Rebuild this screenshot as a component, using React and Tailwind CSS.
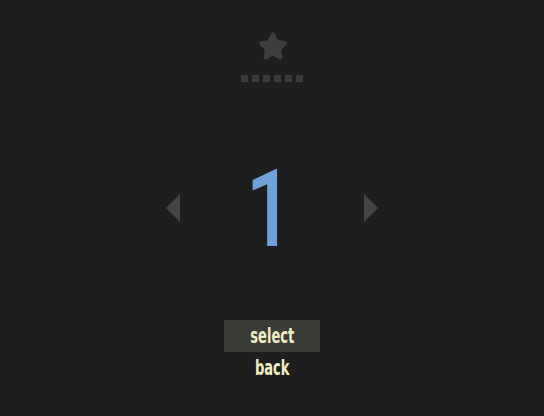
import React from "react";

function Star() {
  const cx = 15, cy = 16.2, R = 12.6, r = 6.3;
  const pts = [];
  for (let i = 0; i < 10; i++) {
    const a = -Math.PI / 2 + (i * Math.PI) / 5;
    const rad = i % 2 === 0 ? R : r;
    pts.push(`${(cx + rad * Math.cos(a)).toFixed(2)},${(cy + rad * Math.sin(a)).toFixed(2)}`);
  }
  return (
    <svg width="30" height="30" viewBox="0 0 30 30">
      <polygon points={pts.join(" ")} fill="#3c3f3b" stroke="#3c3f3b" strokeWidth="4" strokeLinejoin="round" />
    </svg>
  );
}

export default function App() {
  return (
    <div className="w-[544px] h-[416px] bg-[#1e1e1e] flex flex-col items-center overflow-hidden" style={{ fontFamily: "'DejaVu Sans Condensed', 'DejaVu Sans', sans-serif" }}>
      <div className="pt-[31px] pl-[1px]">
        <Star />
      </div>
      <div className="mt-[14px] flex gap-[4px]">
        {[0, 1, 2, 3, 4, 5].map((i) => (
          <div key={i} className="w-[7px] h-[7px] bg-[#3b3b3b]" />
        ))}
      </div>
      <div className="mt-[88px] w-[212px] h-[76px] flex items-center justify-between">
        <svg width="14" height="28" viewBox="0 0 14 28">
          <polygon points="0,14 14,0 14,28" fill="#454545" />
        </svg>
        <div className="w-[30px] h-[76px] flex items-end justify-center mr-[6px] overflow-visible">
          <span
            className="text-[#70a2da] font-medium inline-block scale-x-[0.78] leading-none"
            style={{ fontFamily: "Roboto, sans-serif", fontSize: "107px", lineHeight: "76px", height: "76px", marginBottom: "-2px" }}
          >
            1
          </span>
        </div>
        <svg width="14" height="28" viewBox="0 0 14 28">
          <polygon points="14,14 0,0 0,28" fill="#454545" />
        </svg>
      </div>
      <div className="mt-[74px] w-[96px] h-[32px] bg-[#3a3c38] flex items-center justify-center">
        <span className="text-[#f2eec4] text-[22px] leading-none font-bold inline-block scale-x-[0.66]">select</span>
      </div>
      <div className="mt-[3px] text-[#f2eec4] text-[22px] leading-none font-bold scale-x-[0.66] pt-[2px]">back</div>
    </div>
  );
}
